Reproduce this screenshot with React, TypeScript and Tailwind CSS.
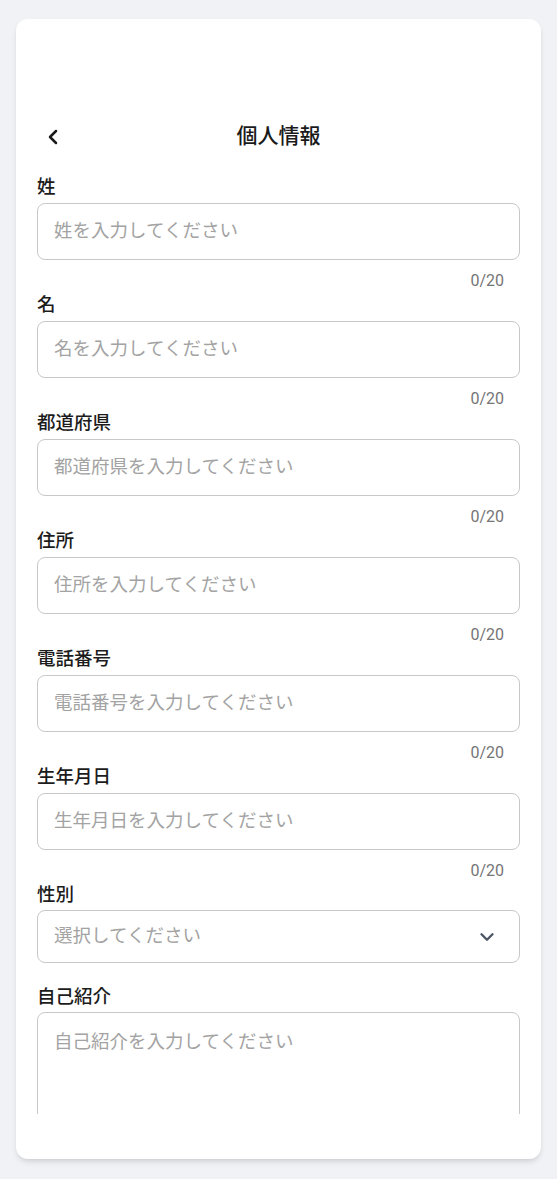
import { ChevronDown, ChevronLeft } from 'lucide-react';

const fields = ['姓', '名', '都道府県', '住所', '電話番号', '生年月日'];

function TextField({ label }: { label: string }) {
  return (
    <div className="flex flex-col">
      <label className="h-6 text-[18.5px] leading-6 font-medium text-[#1c1c1c]">{label}</label>
      <div className="mt-1 h-[57px] rounded-lg border border-[#c8c8c8] px-4 flex items-center">
        <span className="text-[18.5px] text-[#a3a3a3]">{label}を入力してください</span>
      </div>
      <div className="h-5 mt-[11px] mb-[2px] pr-4 text-right text-[16px] leading-5 text-[#757575]">0/20</div>
    </div>
  );
}

export default function App() {
  return (
    <div
      className="min-h-[1179px] bg-[#f0f2f5] pt-[19px] px-4"
      style={{ fontFamily: 'Roboto, "Noto Sans CJK JP", sans-serif' }}
    >
      <div className="h-[1140px] bg-white rounded-xl shadow-md flex flex-col pt-[98px] pb-[45px]">
        <div className="relative h-10 flex items-center justify-center px-[21px]">
          <button className="absolute left-[25px] top-1/2 -translate-y-1/2 text-[#1a1a1a]">
            <ChevronLeft className="w-[24px] h-[24px]" strokeWidth={2.5} />
          </button>
          <h1 className="text-[21px] font-medium text-[#1a1a1a]">個人情報</h1>
        </div>
        <div className="flex-1 overflow-hidden px-[21px] pt-[18px]">
          {fields.map((f) => (
            <TextField key={f} label={f} />
          ))}
          <div className="flex flex-col">
            <label className="h-6 text-[18.5px] leading-6 font-medium text-[#1c1c1c]">性別</label>
            <div className="mt-[3px] h-[53px] rounded-lg border border-[#c8c8c8] pl-4 pr-[21px] flex items-center justify-between">
              <span className="text-[18.5px] text-[#a3a3a3]">選択してください</span>
              <ChevronDown className="w-[22px] h-[22px] text-[#4b5563]" strokeWidth={2.6} />
            </div>
          </div>
          <div className="flex flex-col mt-[22px]">
            <label className="h-6 text-[18.5px] leading-6 font-medium text-[#1c1c1c]">自己紹介</label>
            <div className="mt-[3px] h-[140px] rounded-lg border border-[#c8c8c8] px-4 pt-4">
              <span className="text-[18.5px] leading-[26px] text-[#a3a3a3]">自己紹介を入力してください</span>
            </div>
          </div>
        </div>
      </div>
    </div>
  );
}
